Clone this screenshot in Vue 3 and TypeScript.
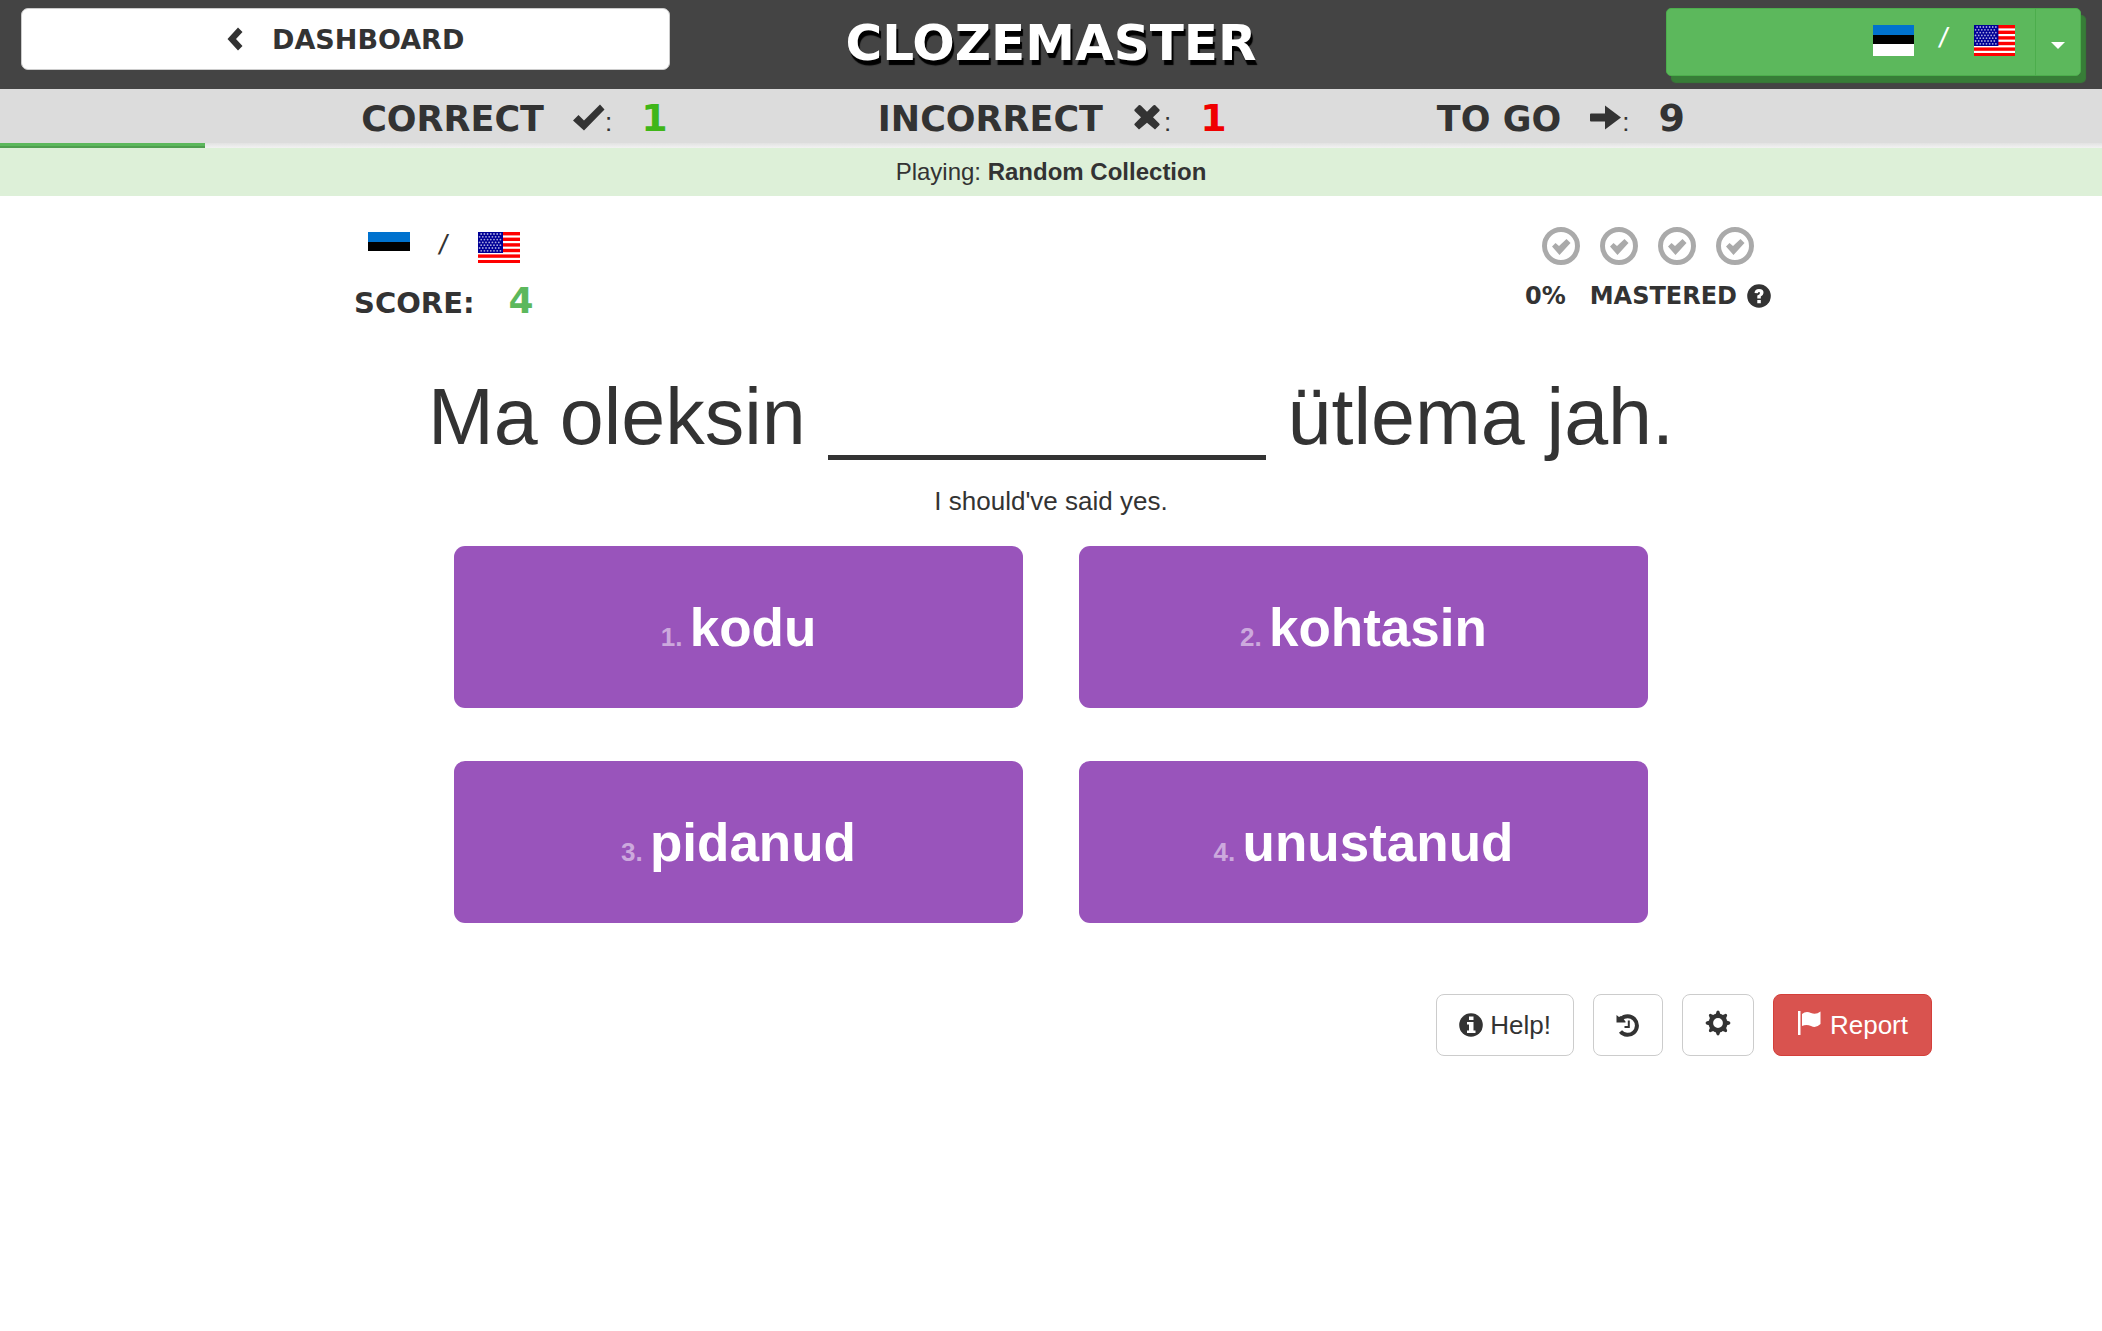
<script setup lang="ts">
import { ref } from 'vue'

interface Stat {
  key: string
  label: string
  value: number
  path: string
}

const stats: Stat[] = [
  {
    key: 'correct',
    label: 'CORRECT',
    value: 1,
    path: 'M0 16.5 L5.5 11 L11 16.5 L27 0.5 L31.5 5.5 L11 26.5 Z',
  },
  {
    key: 'incorrect',
    label: 'INCORRECT',
    value: 1,
    path: 'M2.5 5.5 L7 1 Q8 0.8 8.8 1.5 L15 7.8 L21.2 1.5 Q22 0.8 23 1 L27.5 5.5 Q28 6.5 27.2 7.2 L21 13.2 L27.2 19.5 Q28 20.2 27.5 21 L23 25.5 L15 18.8 L7 25.5 L2.5 21 Q2 20.2 2.8 19.5 L9 13.2 L2.8 7.2 Q2 6.5 2.5 5.5 Z',
  },
  {
    key: 'togo',
    label: 'TO GO',
    value: 9,
    path: 'M0 10.5 Q0 9.5 1 9.5 H15 V1.5 L31 13.5 L15 25.5 V17.5 H1 Q0 17.5 0 16.5 Z',
  },
]

const options: string[] = ['kodu', 'kohtasin', 'pidanud', 'unustanud']
const progress = ref(9.75)
const answer = ref('')
const teeth: number[] = [0, 45, 90, 135, 180, 225, 270, 315]
const starRows: number[] = [0, 1, 2, 3, 4, 5, 6]
</script>

<template>
  <div class="app">
    <svg class="defs" aria-hidden="true">
      <symbol id="flag-ee" viewBox="0 0 42 31" preserveAspectRatio="none">
        <rect width="42" height="31" fill="#fff" />
        <rect width="42" height="10" fill="#0072ce" />
        <rect y="10" width="42" height="9" fill="#000" />
      </symbol>
      <symbol id="flag-us" viewBox="0 0 42 31" preserveAspectRatio="none">
        <rect width="42" height="31" fill="#fff" />
        <rect v-for="i in 6" :key="i" :y="(i - 1) * 5.6" width="42" height="3.4" fill="#f00" />
        <rect width="25" height="21" fill="#000096" />
        <g fill="#a9a9dd">
          <template v-for="r in starRows" :key="r">
            <circle v-for="c in 7" :key="c" :cx="c * 3.2 - (r % 2 ? 1.6 : 0)" :cy="2 + r * 2.8" r="0.9" />
          </template>
        </g>
      </symbol>
    </svg>

    <header class="topbar">
      <button type="button" class="dashboard">
        <svg width="16" height="24" viewBox="0 0 16 24" aria-hidden="true">
          <path d="M11 0.5 L15.5 5 L9 12 L15.5 19 L11 23.5 L0.5 12 Z" fill="#333" />
        </svg>
        <span>DASHBOARD</span>
      </button>
      <h1 class="logo">CLOZEMASTER</h1>
      <div class="pair">
        <button type="button" class="pair-main" aria-label="Language pairing">
          <svg class="flag"><use href="#flag-ee" /></svg>
          <span class="slash">/</span>
          <svg class="flag"><use href="#flag-us" /></svg>
        </button>
        <button type="button" class="pair-toggle" aria-label="Toggle menu">
          <svg width="14" height="7" viewBox="0 0 14 7" aria-hidden="true"><path d="M0 0H14L7 7Z" fill="#fff" /></svg>
        </button>
      </div>
    </header>

    <div class="stats">
      <div v-for="s in stats" :key="s.key" class="stat">
        <span class="stat-label">{{ s.label }}</span>
        <span class="stat-icon">
          <svg width="32" height="27" viewBox="0 0 32 27" aria-hidden="true"><path :d="s.path" fill="#333" /></svg><span class="colon">:</span>
        </span>
        <span class="stat-value" :class="s.key">{{ s.value }}</span>
      </div>
    </div>
    <div class="progress"><div class="progress-fill" :style="{ width: progress + '%' }"></div></div>
    <div class="playing">Playing: <strong>Random Collection</strong></div>

    <main>
      <section class="info">
        <div class="info-col">
          <div class="flags">
            <svg class="flag wide"><use href="#flag-ee" /></svg>
            <span class="slash">/</span>
            <svg class="flag wide"><use href="#flag-us" /></svg>
          </div>
          <div class="score"><span>SCORE:</span><span class="score-value">4</span></div>
        </div>
        <div class="info-col">
          <div class="levels">
            <svg v-for="n in 4" :key="n" width="38" height="38" viewBox="0 0 38 38" aria-hidden="true">
              <circle cx="19" cy="19" r="16.5" fill="none" stroke="#aaa" stroke-width="5" />
              <path d="M10 19.5 L13.5 16 L17 19 L24.5 12 L28.5 16 L17.5 28 Z" fill="#aaa" />
            </svg>
          </div>
          <div class="mastered">
            <span>0%</span>
            <span class="mastered-label">MASTERED
              <svg width="24" height="24" viewBox="0 0 24 24" aria-hidden="true">
                <circle cx="12" cy="12" r="11.8" fill="#333" />
                <path d="M7.5 9 Q7.8 5 12 5 Q16.8 5.2 16.5 9 Q16.2 11.5 13.8 12.6 V14.5 H10.3 V11.5 Q13 10.5 13 9 Q12.8 7.8 11.8 8 Q10.8 8.2 10.8 9.3 Z M10.3 16 H13.8 V19.2 H10.3 Z" fill="#fff" />
              </svg>
            </span>
          </div>
        </div>
      </section>

      <section class="question">
        <div class="sentence">
          Ma oleksin <input v-model="answer" type="text" class="cloze" aria-label="Missing word"> ütlema jah.
        </div>
        <p class="translation">I should've said yes.</p>
      </section>

      <section class="options">
        <button v-for="(word, i) in options" :key="word" type="button" class="option">
          <span class="option-number">{{ i + 1 }}. </span>{{ word }}
        </button>
      </section>

      <section class="tools">
        <button type="button" class="tool">
          <svg width="24" height="24" viewBox="0 0 24 24" aria-hidden="true">
            <circle cx="12" cy="12" r="11.8" fill="#333" />
            <path d="M10 3.5H14.5V7H10Z M8 9H14.5V17.5H16.5V20H8V17.5H10V11.5H8Z" fill="#fff" />
          </svg>
          Help!
        </button>
        <button type="button" class="tool" aria-label="History">
          <svg width="24" height="24" viewBox="0 0 24 24" aria-hidden="true">
            <path d="M5 6 A9.3 9.3 0 1 1 4.5 18.5" fill="none" stroke="#333" stroke-width="4" />
            <path d="M0.5 2 L3 4 L5 3 L9.5 8.5 V9.5 H0.5 Z" fill="#333" />
            <path d="M12.8 7.5 V14 H8.5" fill="none" stroke="#333" stroke-width="2" />
          </svg>
        </button>
        <button type="button" class="tool raised" aria-label="Settings">
          <svg width="26" height="26" viewBox="0 0 26 26" aria-hidden="true">
            <circle cx="13" cy="13" r="7.2" fill="none" stroke="#333" stroke-width="4.6" />
            <path v-for="t in teeth" :key="t" d="M10.5 4.5 L11.6 1.5 Q13 -0.3 14.4 1.5 L15.5 4.5 Z" :transform="`rotate(${t} 13 13)`" fill="#333" />
          </svg>
        </button>
        <button type="button" class="tool raised report">
          <svg width="26" height="26" viewBox="0 0 26 26" aria-hidden="true">
            <path d="M1 1H3.5V25H1Z" fill="#fff" />
            <path d="M5 4 Q9 0.5 14 3 Q19 5 23.5 1.5 V14 Q19 18.5 14 16 Q9.5 13.8 5 16 Z" fill="#fff" />
          </svg>
          Report
        </button>
      </section>
    </main>
  </div>
</template>

<style>
body {
  margin: 0;
  background: #fff;
}
</style>

<style scoped>
.app {
  font-family: "Liberation Sans", Arial, sans-serif;
  color: #333;
}
* {
  box-sizing: border-box;
}
button {
  font: inherit;
  color: inherit;
  cursor: pointer;
}
svg {
  display: block;
  flex: none;
}
.defs {
  position: absolute;
  width: 0;
  height: 0;
}
.topbar,
.stats,
.score,
.mastered {
  font-family: "DejaVu Sans", sans-serif;
  font-weight: bold;
}
.topbar {
  display: grid;
  grid-template-columns: repeat(3, 1fr);
  gap: 56px;
  align-items: start;
  height: 89px;
  padding: 8px 21px 0;
  background: #444;
}
.dashboard {
  display: flex;
  align-items: center;
  justify-content: center;
  gap: 29px;
  height: 62px;
  padding: 0;
  font-size: 27px;
  background: #fff;
  border: 1px solid #ccc;
  border-radius: 7px;
}
.logo {
  margin: 0;
  font-size: 50px;
  line-height: 70px;
  text-align: center;
  color: #fff;
  text-shadow: 2px 5px 1px #000;
}
.pair {
  display: flex;
  justify-self: end;
  width: 415px;
  height: 68px;
  border-radius: 5px;
  box-shadow: 5px 7px 1px #377d37;
}
.pair-main,
.pair-toggle {
  display: flex;
  background: #5cb85c;
  border: 1px solid #4cae4c;
}
.pair-main {
  flex: 1;
  justify-content: flex-end;
  align-items: flex-start;
  padding: 16px 20px 0 0;
  border-radius: 5px 0 0 5px;
  color: #fff;
}
.pair-toggle {
  width: 46px;
  margin-left: -1px;
  align-items: center;
  justify-content: center;
  padding: 6px 0 0;
  border-radius: 0 5px 5px 0;
}
.flag {
  width: 41px;
  height: 31px;
}
.flag.wide {
  width: 42px;
}
.slash {
  width: 60px;
  font-family: "DejaVu Sans Mono", monospace;
  font-size: 24px;
  font-weight: normal;
  line-height: 24px;
  text-align: center;
}
.flags .slash {
  width: 68px;
}
.stats {
  display: flex;
  justify-content: center;
  gap: 10vw;
  height: 54px;
  padding-right: 56px;
  background: #dcdcdc;
}
.stat {
  display: flex;
  align-items: baseline;
  gap: 29px;
  line-height: 58px;
}
.stat-label {
  font-size: 35px;
}
.stat-icon {
  display: flex;
  align-items: baseline;
}
.colon {
  font-family: "Liberation Sans", Arial, sans-serif;
  font-size: 26px;
  font-weight: normal;
}
.stat-value {
  font-size: 38px;
}
.stat-value.correct {
  color: #3fb618;
}
.stat-value.incorrect {
  color: #f00000;
}
.progress {
  height: 5px;
  background: linear-gradient(#e2e2e2, #f2f2f2);
}
.progress-fill {
  height: 5px;
  background: linear-gradient(#5cb85c 60%, #4f9e4f 60%);
}
.playing {
  height: 48px;
  font-size: 24px;
  line-height: 48px;
  text-align: center;
  background: #ddf0d8;
}
.info {
  display: flex;
  justify-content: space-between;
  max-width: 1440px;
  margin: 0 auto;
  padding: 31px 0 0 23px;
}
.info-col {
  display: flex;
  flex-direction: column;
  align-items: center;
}
.flags {
  display: flex;
  padding-top: 5px;
}
.score {
  display: flex;
  align-items: baseline;
  gap: 34px;
  margin-top: 17px;
  font-size: 29px;
  line-height: 42px;
}
.score-value {
  font-size: 36px;
  color: #5cb85c;
}
.levels {
  display: flex;
  gap: 20px;
}
.mastered {
  display: flex;
  gap: 24px;
  margin-top: 17px;
  font-size: 24px;
  line-height: 28px;
}
.mastered-label {
  display: flex;
  align-items: center;
  gap: 10px;
}
.question {
  padding-top: 48px;
  text-align: center;
}
.sentence {
  font-size: 79px;
  line-height: 90px;
}
.cloze {
  width: 438px;
  height: 80px;
  padding: 0;
  font: inherit;
  text-align: center;
  color: inherit;
  background: transparent;
  border: 0;
  border-bottom: 5px solid #333;
  border-radius: 0;
  outline: 0;
}
.translation {
  margin: 21px 0 0;
  font-size: 26px;
  line-height: 36px;
}
.options {
  display: grid;
  grid-template-columns: 1fr 1fr;
  gap: 53px 56px;
  max-width: 1194px;
  margin: 27px auto 0;
}
.option {
  height: 162px;
  font-size: 53px;
  font-weight: bold;
  color: #fff;
  background: #9954bb;
  border: 0;
  border-radius: 11px;
}
.option-number {
  font-size: 26px;
  color: #cca9dd;
  white-space: pre;
}
.tools {
  display: flex;
  justify-content: flex-end;
  gap: 19px;
  max-width: 1762px;
  margin: 71px auto 0;
}
.tool {
  display: flex;
  align-items: center;
  gap: 7px;
  height: 62px;
  padding: 0 22px;
  font-size: 26px;
  background: #fff;
  border: 1px solid #ccc;
  border-radius: 8px;
}
.tool.raised svg {
  margin-bottom: 4px;
}
.tool.report {
  padding: 0 23px;
  color: #fff;
  background: #d9534f;
  border-color: #d43f3a;
}
</style>
